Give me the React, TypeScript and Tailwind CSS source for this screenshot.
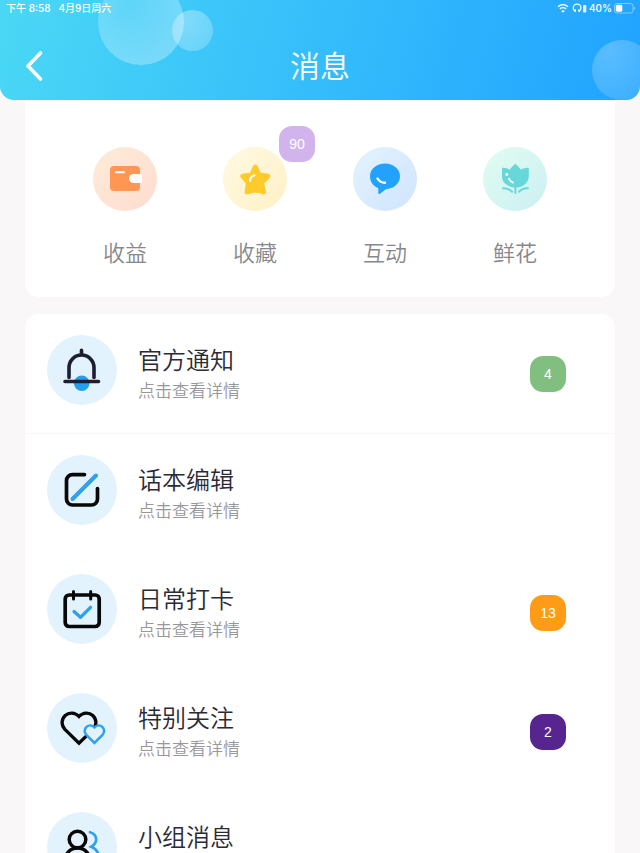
import type { ReactNode } from 'react';

const FONT = "font-['Inter','Noto_Sans_CJK_SC',sans-serif]";

function WalletIcon() {
  return (
    <svg width="64" height="64" viewBox="0 0 64 64" fill="none" aria-hidden="true">
      <rect x="17" y="19" width="30" height="25" rx="4" fill="#ff9654" />
      <path d="M23 25.3h8" stroke="#fff" strokeWidth="2" strokeLinecap="round" />
      <path d="M40.500 27H47a2 2 0 0 1 2 2v5a2 2 0 0 1-2 2h-6.500a4.500 4.500 0 0 1 0-9z" fill="#fff" />
    </svg>
  );
}

function StarIcon() {
  return (
    <svg width="64" height="64" viewBox="0 0 64 64" fill="none" aria-hidden="true">
      <path
        d="M32.300 20l3.700 8 8.800 1.200-6.300 6.600 2 9.200c-5.400-2.200-11-2.200-16.400 0l1.300-9.200-5.600-6.600 8.800-1.200z"
        fill="#ffcb2b"
        stroke="#ffcb2b"
        strokeWidth="5"
        strokeLinejoin="round"
      />
      <path d="M27 34c.2-3 1.800-5 4.500-5.700" stroke="#fff" strokeWidth="2" strokeLinecap="round" />
    </svg>
  );
}

function ChatIcon() {
  return (
    <svg width="64" height="64" viewBox="0 0 64 64" fill="none" aria-hidden="true">
      <path
        d="M32 16.500c8.500 0 15 5.500 15 12.800S40.500 42 32.800 42.200L27 46.700c-.8.6-1.700.1-1.700-.8v-4.700C20.300 39.200 17 34.800 17 29.300c0-7.300 6.500-12.800 15-12.800z"
        fill="#22a2fc"
      />
      <path d="M24.500 31.500c1.600 2.800 4.200 4.200 7.500 4.300" stroke="#fff" strokeWidth="2.400" strokeLinecap="round" />
    </svg>
  );
}

function FlowerIcon() {
  return (
    <svg width="64" height="64" viewBox="0 0 64 64" fill="none" aria-hidden="true">
      <path
        d="M32.300 16.700c.6 0 4.200 4.100 5.700 6 1.500-1 4.500-1.900 6.500-1.900.9 0 1.300.6 1.300 1.400v7.300c0 6-5.500 11-13.200 11S19 35.500 19 29.500v-7.300c0-.8.5-1.400 1.400-1.400 2 0 4.800.9 6.300 1.900 1.500-1.900 5-6 5.600-6z"
        fill="#66d8da"
      />
      <path d="M32.400 40v6" stroke="#66d8da" strokeWidth="2" strokeLinecap="round" />
      <path d="M20 41.300c3.800-.2 6.500.8 9 3.500M45 41.300c-3.800-.2-6.500.8-9 3.500" stroke="#66d8da" strokeWidth="2" strokeLinecap="round" />
      <circle cx="23.800" cy="27.500" r="1.400" fill="#fff" />
      <path d="M26 31.800c1 1.900 2.300 3 4 3.800" stroke="#fff" strokeWidth="1.800" strokeLinecap="round" />
    </svg>
  );
}

function BellIcon() {
  return (
    <svg width="70" height="70" viewBox="0 0 70 70" fill="none" aria-hidden="true">
      <circle cx="34.700" cy="48.300" r="7.800" fill="#249ff0" />
      <g stroke="#1c1f30" strokeWidth="3.600" strokeLinecap="round">
        <path d="M22 42.500V32.500a12.500 12.500 0 0 1 25 0v10" />
        <path d="M34.500 19.500v-4.300M18 46.500h33.500" />
      </g>
    </svg>
  );
}

function EditIcon() {
  return (
    <svg width="70" height="70" viewBox="0 0 70 70" fill="none" strokeLinecap="round" aria-hidden="true">
      <path d="M37.500 19.600H25.500a6 6 0 0 0-6 6V44a6 6 0 0 0 6 6h19a6 6 0 0 0 6-6V33.500" stroke="#080808" strokeWidth="3.700" />
      <path d="M25.500 44L49 20.500" stroke="#2fa0ee" strokeWidth="4" />
    </svg>
  );
}

function CalendarIcon() {
  return (
    <svg width="70" height="70" viewBox="0 0 70 70" fill="none" strokeLinecap="round" strokeLinejoin="round" aria-hidden="true">
      <rect x="18.200" y="21" width="34" height="31.500" rx="4" stroke="#080808" strokeWidth="3.700" />
      <path d="M26.500 17.500V25M43.700 17.500V25" stroke="#080808" strokeWidth="3" />
      <path d="M27 37.500l6.500 5.800 10-10" stroke="#2fa0ee" strokeWidth="3.300" />
    </svg>
  );
}

function HeartsIcon() {
  return (
    <svg width="70" height="70" viewBox="0 0 70 70" fill="none" aria-hidden="true">
      <path
        d="M32 23.500c-4-4.300-10-4.500-13.800-1-4.100 3.900-4.100 9.700-.3 13.900L32 50.200l14.100-13.800c3.800-4.200 3.800-10-.3-13.900-3.800-3.500-9.800-3.300-13.800 1z"
        stroke="#080808"
        strokeWidth="3.300"
      />
      <path
        d="M47.400 34.500c-2.300-2.500-5.600-2.600-7.900-.6-2.400 2.200-2.400 5.600-.2 8l8.100 8 8.100-8c2.200-2.400 2.200-5.800-.2-8-2.300-2-5.600-1.900-7.900.6z"
        fill="#e3f3fe"
        stroke="#2fa0ee"
        strokeWidth="2.500"
      />
    </svg>
  );
}

function GroupIcon() {
  return (
    <svg width="70" height="70" viewBox="0 0 70 70" fill="none" strokeLinecap="round" aria-hidden="true">
      <circle cx="30.500" cy="27.500" r="8.300" stroke="#080808" strokeWidth="3.500" />
      <path d="M17.500 51c0-8.500 5-15 13-15s13 6.500 13 15z" stroke="#080808" strokeWidth="3.500" strokeLinejoin="round" />
      <path d="M43 20.200c7.500 2 8.300 10.500 1.300 14.500 5 1.800 8 6.500 8 14.300h-3" stroke="#2fa0ee" strokeWidth="2.700" />
    </svg>
  );
}

function StatusIcons() {
  return (
    <svg width="30" height="12" viewBox="0 0 30 12" fill="none" stroke="#fff" aria-hidden="true">
      <path d="M1 4.800c3-2.800 7-2.800 10 0M2.900 6.900c1.900-1.700 4.300-1.700 6.200 0" strokeWidth="1.500" />
      <path d="M6 10.800L4.200 8.900c1-1 2.600-1 3.600 0z" fill="#fff" stroke="none" />
      <path d="M18.200 9.500C16.500 8 16.200 6.700 16.200 6a3.900 3.900 0 0 1 7.800 0c0 .7-.3 2-2 3.500" strokeWidth="1.200" />
      <path d="M18.300 7.200v2.600M21.900 7.200v2.600" strokeWidth="1.400" />
      <rect x="26" y="3" width="3.300" height="7.500" rx=".8" fill="#fff" fillOpacity=".85" stroke="none" />
    </svg>
  );
}

function BatteryIcon() {
  return (
    <svg width="22" height="12" viewBox="0 0 22 12" fill="none" aria-hidden="true">
      <rect x=".5" y="1.500" width="18.500" height="9.500" rx="2.600" stroke="#fff" strokeOpacity=".45" />
      <rect x="1.800" y="2.800" width="6.500" height="6.900" rx="1.400" fill="#fff" />
      <path d="M20.200 4.700v3.200c.8-.3 1.100-.9 1.100-1.600s-.3-1.300-1.100-1.600z" fill="#fff" fillOpacity=".5" />
    </svg>
  );
}

interface Shortcut {
  label: string;
  icon: ReactNode;
  circle: string;
  badge?: number;
}

const SHORTCUTS: Shortcut[] = [
  { label: '收益', icon: <WalletIcon />, circle: 'from-[#fdebd8] to-[#ffdccf]' },
  { label: '收藏', icon: <StarIcon />, circle: 'from-[#fffae3] to-[#fff0c6]', badge: 90 },
  { label: '互动', icon: <ChatIcon />, circle: 'from-[#e3f3fe] to-[#cfe4fd]' },
  { label: '鲜花', icon: <FlowerIcon />, circle: 'from-[#e2fdf1] to-[#cbeff3]' }
];

interface Message {
  title: string;
  icon: ReactNode;
  count?: number;
  color?: string;
}

const MESSAGES: Message[] = [
  { title: '官方通知', icon: <BellIcon />, count: 4, color: 'bg-[#81bf80]' },
  { title: '话本编辑', icon: <EditIcon /> },
  { title: '日常打卡', icon: <CalendarIcon />, count: 13, color: 'bg-[#ff9c17]' },
  { title: '特别关注', icon: <HeartsIcon />, count: 2, color: 'bg-[#56258f]' },
  { title: '小组消息', icon: <GroupIcon /> }
];

function Badge({ value, className }: { value: number; className?: string }) {
  return (
    <span
      className={`flex size-9 items-center justify-center rounded-[13px] font-['Liberation_Sans',sans-serif] text-sm text-white ${className ?? ''}`}
    >
      {value}
    </span>
  );
}

function Header() {
  return (
    <header className="relative z-10 shrink-0 overflow-hidden rounded-b-[14px] bg-linear-[105deg] from-[#4ad8f5] via-[#35bdfb] to-[#20a3ff] text-white">
      <div className="absolute -top-[21px] left-[98px] size-[86px] rounded-full bg-radial-[at_35%_30%] from-white/15 to-white/35" />
      <div className="absolute top-[10px] left-[172px] size-[41px] rounded-full bg-radial-[at_35%_20%] from-white/35 to-white/20" />
      <div className="absolute top-[40px] -right-[12px] size-[60px] rounded-full bg-radial-[at_30%_20%] from-white/25 to-white/10" />

      <div className="relative flex h-4 items-center justify-between pr-1 pl-[6px] text-[10px] font-medium">
        <div className="flex gap-2">
          <span>下午 8:58</span>
          <span>4月9日周六</span>
        </div>
        <div className="flex items-center gap-0.5">
          <StatusIcons />
          <span>40%</span>
          <BatteryIcon />
        </div>
      </div>

      <div className="relative grid h-[84px] grid-cols-[1fr_auto_1fr] items-center px-[18px] pt-4">
        <button type="button" aria-label="返回" className="flex size-8 items-center justify-center justify-self-start">
          <svg width="32" height="32" viewBox="0 0 32 32" fill="none" aria-hidden="true">
            <path d="M22.500 3L10 16l12.500 13" stroke="#fff" strokeWidth="3.600" strokeLinecap="round" strokeLinejoin="round" />
          </svg>
        </button>
        <h1 className="text-[30px] leading-9 font-[350]">消息</h1>
      </div>
    </header>
  );
}

export default function App() {
  return (
    <div className={`flex h-screen flex-col overflow-hidden bg-[#f9f7f8] ${FONT}`}>
      <Header />

      <main className="min-h-0 flex-1 overflow-y-auto px-[25px] [scrollbar-width:none]">
        <nav className="grid grid-cols-4 rounded-b-[14px] bg-white px-[35px] pt-[47px] pb-7">
          {SHORTCUTS.map(({ label, icon, circle, badge }) => (
            <a key={label} href="#" className="flex flex-col items-center gap-[26px]">
              <span className={`relative size-16 rounded-full bg-linear-to-br ${circle}`}>
                {icon}
                {badge !== undefined && <Badge value={badge} className="absolute -top-[21px] left-14 bg-[#d2b4ec]" />}
              </span>
              <span className="text-[22px] leading-8 font-[350] text-[#88888c]">{label}</span>
            </a>
          ))}
        </nav>

        <ul className="mt-[17px] rounded-t-[14px] bg-white">
          {MESSAGES.map(({ title, icon, count, color }) => (
            <li key={title} className="first:border-b first:border-[#f7f7f8]">
              <a href="#" className="flex h-[119px] items-center pr-[49px] pl-[22px]">
                <span className="mb-2 size-[70px] shrink-0 rounded-full bg-[#e3f3fe]">{icon}</span>
                <span className="ml-[21px] flex flex-1 flex-col gap-0.5">
                  <span className="text-2xl leading-8 font-[350] text-[#2b2b35]">{title}</span>
                  <span className="text-[17px] leading-6 font-[350] text-[#98989c]">点击查看详情</span>
                </span>
                {count !== undefined && <Badge value={count} className={color} />}
              </a>
            </li>
          ))}
        </ul>
      </main>
    </div>
  );
}
